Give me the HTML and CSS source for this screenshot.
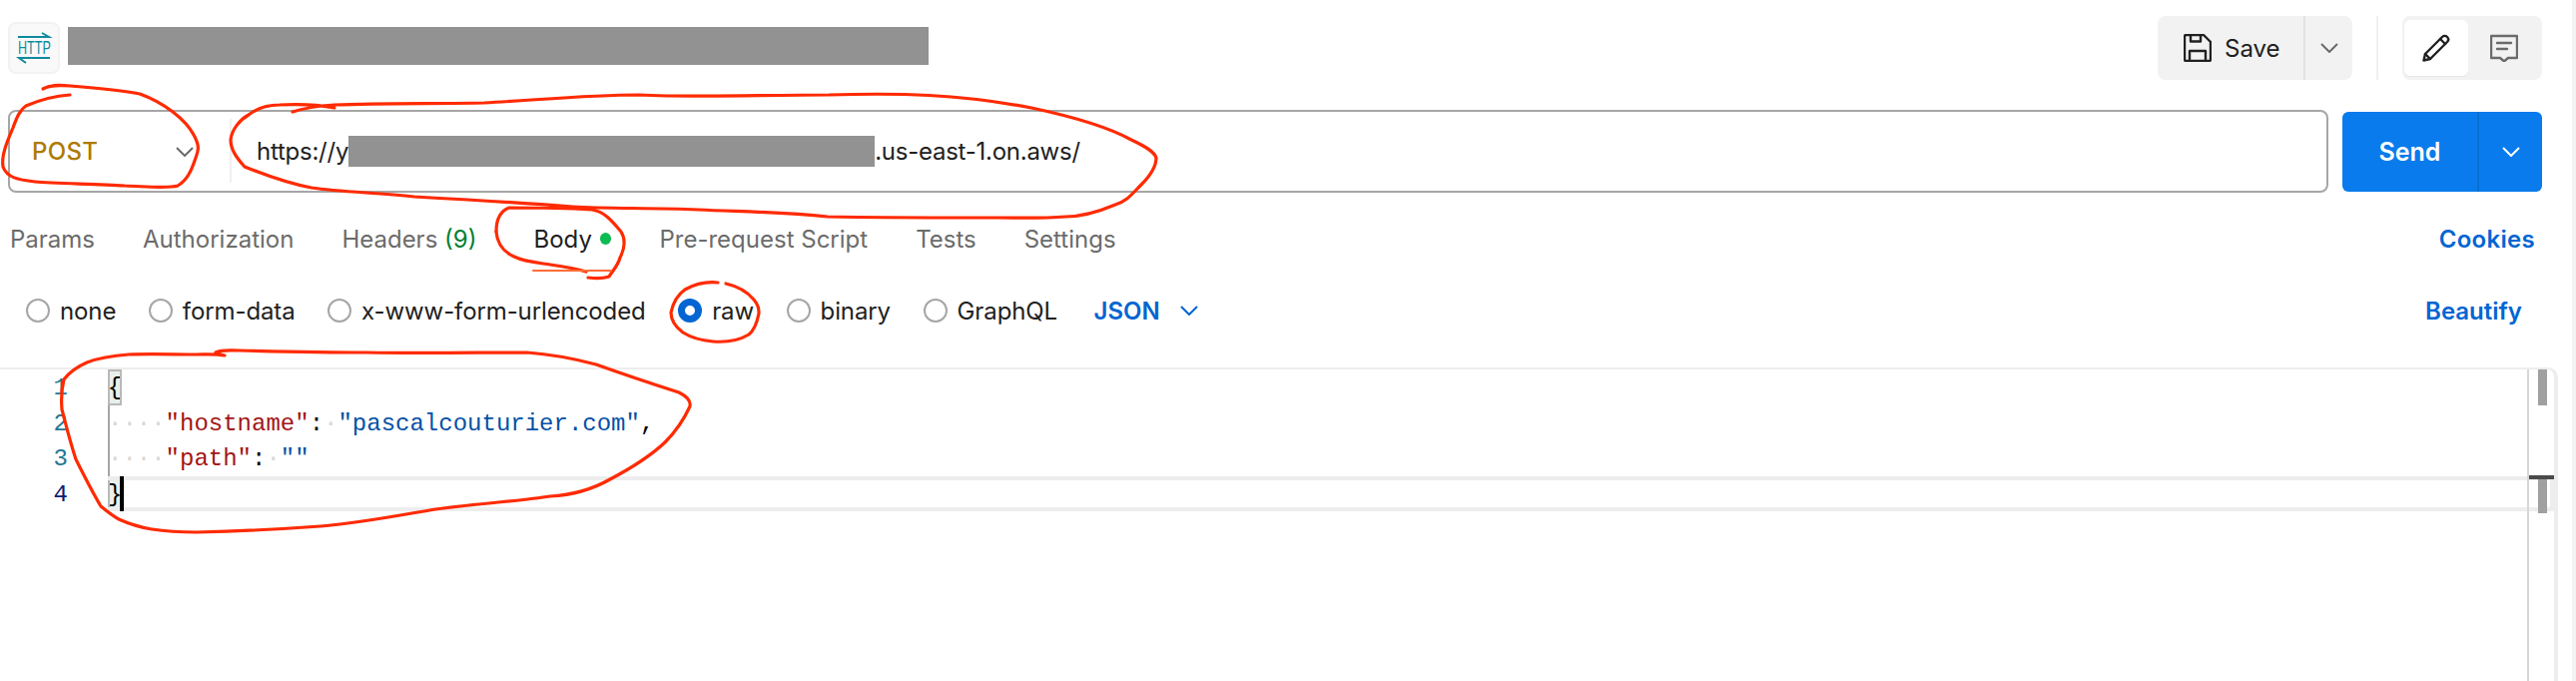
FILE: index.html
```html
<!DOCTYPE html>
<html lang="en">
<head>
<meta charset="utf-8">
<title>HTTP request</title>
<link rel="stylesheet" href="styles.css">
</head>
<body>
<div class="app">
  <header class="topbar">
    <div class="http-icon">
      <svg class="http-svg" width="48" height="48" viewBox="0 0 48 48">
        <path class="teal" d="M8 13H39L32 9"/>
        <path class="teal" d="M40 34H9L16 39"/>
        <text class="http-text" transform="translate(8 30) scale(.72 1)">HTTP</text>
      </svg>
    </div>
    <div class="redact title-redact"></div>
    <div class="top-actions">
      <div class="save-group">
        <button class="save-btn">
          <svg width="28" height="28" viewBox="0 0 28 28" class="ink">
            <path d="M1 2.5A1.5 1.5 0 0 1 2.5 1H20L27 8V25.500A1.500 1.500 0 0 1 25.500 27H2.500A1.500 1.500 0 0 1 1 25.500Z"/>
            <path d="M7 1V7.500H17V1"/>
            <path d="M6 27V17H22V27"/>
          </svg>
          <span>Save</span>
        </button>
        <button class="save-more">
          <svg width="18" height="10" viewBox="0 0 18 10" class="chev"><path d="M1 1L9 9L17 1"/></svg>
        </button>
      </div>
      <div class="vsep"></div>
      <div class="mode-group">
        <div class="mode active">
          <svg width="28" height="28" viewBox="0 0 28 28" class="ink">
            <path d="M1.500 26.500L3 20L20 3C21.500 1.500 23.500 1.500 25 3C26.500 4.500 26.500 6.500 25 8L8 25Z"/>
            <path d="M18 5L23 10"/>
            <path d="M3 20L8 25"/>
          </svg>
        </div>
        <div class="mode">
          <svg width="28" height="28" viewBox="0 0 28 28" class="ink soft">
            <path d="M1 2H27V24H18L14 27.500L10 24H1Z"/>
            <path d="M7 9H21"/>
            <path d="M7 15H17"/>
          </svg>
        </div>
      </div>
    </div>
  </header>

  <section class="request-row">
    <div class="url-box">
      <div class="method">
        <span>POST</span>
        <svg width="18" height="10" viewBox="0 0 18 10" class="chev"><path d="M1 1L9 9L17 1"/></svg>
      </div>
      <div class="url"><span>https://y</span><span class="redact url-redact"></span><span>.us-east-1.on.aws/</span></div>
    </div>
    <div class="send">
      <span class="send-label">Send</span>
      <span class="send-more"><svg width="18" height="10" viewBox="0 0 18 10" class="chev white"><path d="M1 1L9 9L17 1"/></svg></span>
    </div>
  </section>

  <nav class="tabs">
    <span class="tab">Params</span>
    <span class="tab">Authorization</span>
    <span class="tab">Headers <em class="count">(9)</em></span>
    <span class="tab current">Body<i class="dot"></i></span>
    <span class="tab">Pre-request Script</span>
    <span class="tab">Tests</span>
    <span class="tab">Settings</span>
    <span class="link cookies">Cookies</span>
  </nav>

  <div class="body-types">
    <label class="radio"><i class="circle"></i>none</label>
    <label class="radio"><i class="circle"></i>form-data</label>
    <label class="radio"><i class="circle"></i>x-www-form-urlencoded</label>
    <label class="radio"><i class="circle on"></i>raw</label>
    <label class="radio"><i class="circle"></i>binary</label>
    <label class="radio"><i class="circle"></i>GraphQL</label>
    <span class="link json">JSON<svg width="18" height="10" viewBox="0 0 18 10" class="chev blue"><path d="M1 1L9 9L17 1"/></svg></span>
    <span class="link beautify">Beautify</span>
  </div>

  <div class="editor">
    <div class="line"><span class="ln">1</span><span class="code"><span class="match">{</span></span></div>
    <div class="line guided"><span class="ln">2</span><span class="code"><span class="ws">····</span><span class="key">"hostname"</span>:<span class="ws">·</span><span class="str">"pascalcouturier.com"</span>,</span></div>
    <div class="line guided"><span class="ln">3</span><span class="code"><span class="ws">····</span><span class="key">"path"</span>:<span class="ws">·</span><span class="str">""</span></span></div>
    <div class="line active-line"><span class="ln dark">4</span><span class="code"><span class="match">}</span><i class="caret"></i></span></div>
    <div class="ruler">
      <i class="thumb thumb-a"></i>
      <i class="thumb thumb-b"></i>
      <i class="ruler-mark"></i>
    </div>
  </div>
</div>

<svg class="scribbles" width="2580" height="682" viewBox="0 0 2580 682" aria-hidden="true">
  <path d="M43 89C50 85 58 85 70 86C95 88 120 90 140 94C165 103 186 120 194 135C200 146 199 150 196 158C192 170 188 180 178 186C168 189 150 187 125 186C95 184 55 184 35 182C18 180 7 178 3 167C1 155 8 140 13 128C17 117 20 110 26 106C40 100 55 96 70 95"/>
  <path d="M293 112C305 108 320 106 335 105C385 103 440 104 485 103C540 100 590 95 640 95C700 98 760 95 830 95C900 93 960 94 1033 108C1080 118 1115 130 1133 140C1148 147 1156 152 1158 158C1158 168 1150 178 1143 185C1133 195 1128 202 1117 205C1098 213 1082 217 1067 217C1040 219 1020 218 1000 218C950 218 880 218 829 217C780 212 740 212 700 210C650 208 610 209 574 207C520 203 470 200 415 197C375 193 340 192 312 188C290 184 270 177 245 167C237 158 231 150 231 140C232 130 240 120 249 115C258 108 268 105 280 105C300 104 320 105 335 108"/>
  <path d="M497 232C497 222 499 212 510 208C530 208 560 208 593 210C605 212 612 220 622 232C627 240 625 250 621 258C619 266 613 272 610 277C604 279 596 279 589 278"/>
  <path d="M497 232C498 245 506 253 515 257C525 262 538 263 551 265C565 267 577 269 587 272"/>
  <path class="thin-orange" d="M534 271H612"/>
  <path d="M727 284C740 287 750 294 755 300C760 306 760 310 760 314C758 324 755 331 750 335C740 341 727 343 714 342C703 341 692 338 684 333C676 327 672 320 672 313C674 303 679 295 686 290C697 284 709 282 719 283"/>
  <path d="M225 356C220 355 218 354 216 353C222 350 228 351 240 351C280 352 330 353 367 353C420 354 480 353 528 353C555 355 578 360 597 365C625 375 655 385 680 393C688 397 692 402 691 407C685 420 677 432 666 443C650 458 630 470 611 480C590 492 570 496 551 497C520 502 470 505 436 510C400 516 360 524 321 527C280 530 240 532 197 533C175 533 165 532 152 530C140 528 130 525 119 520C112 516 107 512 101 507C92 492 84 476 76 460C70 442 66 425 62 410C61 398 62 388 64 380C70 372 78 367 87 363C100 358 115 356 129 355C150 354 175 355 197 355C205 355 215 354 225 356"/>
</svg>
</body>
</html>
```
FILE: styles.css
```css
* { box-sizing: border-box; }
html, body { margin: 0; padding: 0; background: #fff; }
body { width: 2580px; height: 682px; overflow: hidden; font-family: Inter, "Liberation Sans", sans-serif; font-size: 24px; color: #212121; position: relative; }
button { font: inherit; color: inherit; border: 0; padding: 0; background: none; }
em, i { font-style: normal; }

.app { width: 2576px; height: 682px; display: flex; flex-direction: column; }
body::after { content: ""; position: absolute; top: 0; right: 0; bottom: 0; width: 4px; background: #f2f2f2; }

.redact { background: #929292; display: block; }
.ink { fill: none; stroke: #212121; stroke-width: 2.4; stroke-linejoin: round; stroke-linecap: round; }
.ink.soft { stroke: #6b6b6b; }
.chev { fill: none; stroke: #6b6b6b; stroke-width: 2; }
.chev.white { stroke: #fff; }
.chev.blue { stroke: #0265d2; }

.topbar { height: 80px; padding-top: 16px; display: flex; align-items: flex-start; padding-left: 8px; padding-right: 30px; }
.http-icon { width: 52px; height: 52px; margin-top: 6px; background: #f9f9f9; border: 2px solid #f2f2f2; border-radius: 8px; display: flex; align-items: center; justify-content: center; }
.http-svg { flex: none; }
.teal { fill: none; stroke: #0f8a9e; stroke-width: 2; }
.http-text { font-family: "Liberation Sans", sans-serif; font-size: 17.5px; fill: #0f8a9e; }
.title-redact { width: 862px; height: 38px; margin-left: 8px; margin-top: 11px; }
.top-actions { margin-left: auto; display: flex; align-items: stretch; height: 64px; }
.save-group { display: flex; width: 195px; height: 64px; background: #f2f2f2; border-radius: 8px; }
.save-btn { width: 146px; display: flex; align-items: center; justify-content: flex-start; padding-left: 26px; gap: 13px; }
.save-more { flex: 1; border-left: 2px solid #e2e2e2; display: flex; align-items: center; justify-content: center; }
.vsep { width: 2px; background: #f0f0f0; margin-left: 24px; margin-right: 24px; }
.mode-group { width: 140px; background: #f2f2f2; border-radius: 8px; display: flex; padding: 4px 2px 4px 2px; }
.mode { width: 64px; display: flex; align-items: center; justify-content: center; border-radius: 6px; flex: none; }
.mode + .mode { margin-left: 4px; }
.mode.active { background: #fff; box-shadow: 0 1px 1px #e6e6e6; }

.request-row { height: 84px; margin-top: 30px; display: flex; padding-left: 8px; padding-right: 30px; align-items: flex-start; }
.url-box { flex: 1; height: 83px; border: 2px solid #a6a6a6; border-radius: 8px; display: flex; align-items: center; }
.method { width: 222px; height: 64px; margin-top: -1px; padding-left: 22px; padding-right: 36px; border-right: 2px solid #f0f0f0; display: flex; align-items: center; justify-content: space-between; color: #ad7a03; font-weight: 500; letter-spacing: .3px; }
.method svg { margin-top: 2px; }
.url { padding-left: 25px; display: flex; align-items: center; white-space: pre; height: 32px; letter-spacing: -.25px; }
.url-redact { width: 527px; height: 31px; }
.send { width: 200px; height: 80px; margin-left: 14px; margin-top: 2px; background: #097bed; border-radius: 6px; color: #fff; font-weight: 600; font-size: 25px; display: flex; align-items: center; }
.send-label { width: 135px; text-align: center; }
.send-more { flex: 1; height: 100%; border-left: 2px solid #0a6fd4; display: flex; align-items: center; justify-content: center; }

.tabs { height: 78px; padding-top: 12px; display: flex; align-items: center; padding-left: 10px; padding-right: 37px; gap: 48px; color: #6b6b6b; }
.tab { white-space: pre; }
.count { color: #007f31; }
.current { color: #212121; display: flex; align-items: center; margin-left: 9px; width: 78px; }
.dot { width: 12px; height: 12px; border-radius: 50%; background: #0cbb52; margin-left: 8px; }
.link { color: #0265d2; font-weight: 600; }
.cookies { margin-left: auto; letter-spacing: .3px; }

.body-types { height: 78px; display: flex; align-items: center; padding-left: 26px; padding-right: 50px; gap: 32.5px; letter-spacing: -.1px; }
.radio { display: flex; align-items: center; gap: 10px; }
.circle { width: 24px; height: 24px; border-radius: 50%; border: 2px solid #a6a6a6; background: #fff; }
.circle.on { border: 7px solid #0265d2; }
.json { display: flex; align-items: center; gap: 20px; margin-left: 4px; letter-spacing: 0; }
.beautify { margin-left: auto; letter-spacing: 0; }

.editor { position: relative; flex: 1; width: 2562px; margin-top: 18px; border-top: 2px solid #ededed; border-right: 4px solid #ededed; border-top-right-radius: 10px; font-family: "Liberation Mono", monospace; font-size: 24px; }
.line { height: 35.6px; display: flex; align-items: center; }
.ln { width: 108px; padding-right: 40px; padding-top: 2px; text-align: right; color: #237893; }
.ln.dark { color: #0b216f; }
.code { white-space: pre; height: 100%; display: flex; align-items: center; color: #000; position: relative; }
.guided .code { box-shadow: inset 2px 0 0 #a6a6a6; padding-top: 2px; }
.ws { color: #d8d8d8; }
.key { color: #a31515; }
.str { color: #0451a5; }
.match { width: 14px; height: 100%; padding-top: 2px; background: #e9efe9; outline: 2px solid #b9b9b9; outline-offset: -2px; display: flex; align-items: center; justify-content: center; }
.active-line { position: relative; }
.active-line::after { content: ""; position: absolute; left: 108px; right: 0; top: 0; bottom: 0; border-top: 4px solid #ededed; border-bottom: 4px solid #ededed; border-right: 4px solid #ededed; pointer-events: none; }
.caret { position: absolute; left: 12px; top: 0; width: 4px; height: 100%; background: #000; z-index: 1; }

.ruler { position: absolute; top: 0; right: 0; bottom: 0; width: 27px; border-left: 2px solid #d6d6d6; }
.thumb { position: absolute; left: 9px; width: 9px; height: 36px; background: #a0a0a0; }
.thumb-a { top: 0; }
.thumb-b { top: 108px; }
.ruler-mark { position: absolute; left: 0; right: 0; top: 106px; height: 4px; background: #4a4a4a; }

.scribbles { position: absolute; left: 0; top: 0; pointer-events: none; fill: none; stroke: #ff2a00; stroke-width: 3.2; stroke-linecap: round; stroke-linejoin: round; }
.scribbles .thin-orange { stroke: #ff6c37; stroke-width: 2; }
```
